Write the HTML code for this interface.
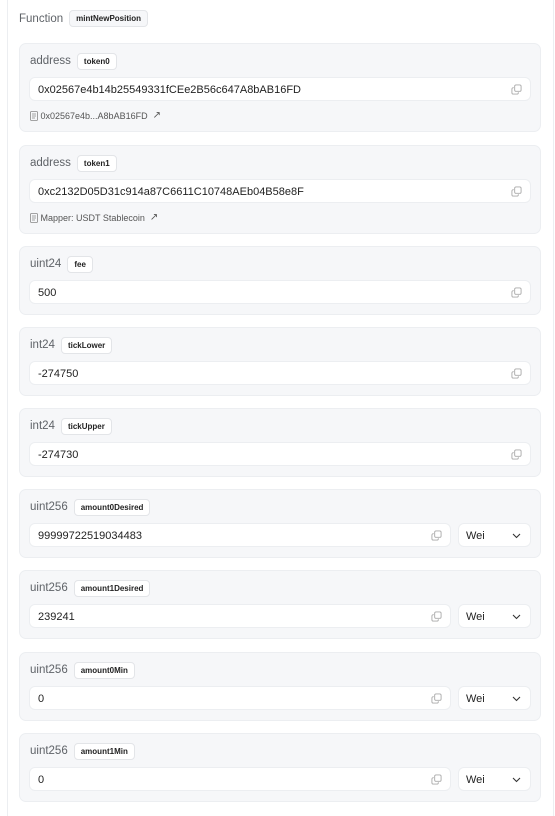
<!DOCTYPE html>
<html><head><meta charset="utf-8"><style>
body{margin:0;width:555px;height:816px;background:#fff;font-family:"Liberation Sans",Arial,sans-serif;position:relative;overflow:hidden}
.vl{position:absolute;top:0;bottom:0;width:1px;background:#eceef1}
.fn{position:absolute;left:19px;top:10px;font-size:11.5px;color:#5f6368;display:flex;align-items:center}
.pill{display:inline-block;background:#fff;border:1px solid #e3e5e8;border-radius:4px;font-size:8px;font-weight:bold;color:#222;padding:0 6px;height:15px;line-height:15px;margin-left:6px}
.fn .pill{background:#f6f7f9}
.card{position:absolute;left:19px;width:520px;background:#f6f7f9;border:1px solid #eceef1;border-radius:7px}
.lbl{position:absolute;left:10px;top:8px;font-size:11.5px;color:#5f6368;display:flex;align-items:center;height:18px}
.inp{position:absolute;left:9px;top:33px;height:24px;background:#fff;border:1px solid #eceef1;border-radius:6px;font-size:11px;color:#222;line-height:24px;padding-left:8px;box-sizing:border-box}
.cp{position:absolute;right:8px;top:6px;width:11px;height:11px}
.sel{position:absolute;left:438px;top:33px;width:73px;height:24px;background:#fff;border:1px solid #eceef1;border-radius:6px;font-size:11px;color:#222;line-height:24px;padding-left:7px;box-sizing:border-box}
.sel svg{position:absolute;right:9px;top:9px}
.lk{position:absolute;left:10px;top:66px;font-size:9px;color:#555;display:flex;align-items:center}
</style></head><body>
<div class="vl" style="left:7px"></div><div class="vl" style="left:553px"></div>
<div class="fn">Function<span class="pill">mintNewPosition</span></div>

<div class="card" style="top:43px;height:87px"><div class="lbl">address<span class="pill">token0</span></div>
<div class="inp" style="width:502px">0x02567e4b14b25549331fCEe2B56c647A8bAB16FD<svg class="cp" viewBox="0 0 12 12" fill="none" stroke="#aaa" stroke-width="1"><rect x="4" y="1" width="7" height="7" rx="1.5"/><path d="M3 4H2.5A1.5 1.5 0 0 0 1 5.5v4A1.5 1.5 0 0 0 2.5 11h4A1.5 1.5 0 0 0 8 9.5V9"/></svg></div>
<div class="lk"><svg width="8" height="10" viewBox="0 0 8 10" fill="none" stroke="#888" stroke-width=".8"><rect x=".5" y=".5" width="7" height="9" rx="1"/><path d="M2 3h4M2 5h4M2 7h3"/></svg>&nbsp;0x02567e4b...A8bAB16FD&nbsp;&nbsp;<span style="font-size:10px">↗</span></div></div>

<div class="card" style="top:145px;height:87px"><div class="lbl">address<span class="pill">token1</span></div>
<div class="inp" style="width:502px">0xc2132D05D31c914a87C6611C10748AEb04B58e8F<svg class="cp" viewBox="0 0 12 12" fill="none" stroke="#aaa" stroke-width="1"><rect x="4" y="1" width="7" height="7" rx="1.5"/><path d="M3 4H2.5A1.5 1.5 0 0 0 1 5.5v4A1.5 1.5 0 0 0 2.5 11h4A1.5 1.5 0 0 0 8 9.5V9"/></svg></div>
<div class="lk"><svg width="8" height="10" viewBox="0 0 8 10" fill="none" stroke="#888" stroke-width=".8"><rect x=".5" y=".5" width="7" height="9" rx="1"/><path d="M2 3h4M2 5h4M2 7h3"/></svg>&nbsp;Mapper: USDT Stablecoin&nbsp;&nbsp;<span style="font-size:10px">↗</span></div></div>

<div class="card" style="top:246px;height:67px"><div class="lbl">uint24<span class="pill">fee</span></div>
<div class="inp" style="width:502px">500<svg class="cp" viewBox="0 0 12 12" fill="none" stroke="#aaa" stroke-width="1"><rect x="4" y="1" width="7" height="7" rx="1.5"/><path d="M3 4H2.5A1.5 1.5 0 0 0 1 5.5v4A1.5 1.5 0 0 0 2.5 11h4A1.5 1.5 0 0 0 8 9.5V9"/></svg></div></div>

<div class="card" style="top:327px;height:67px"><div class="lbl">int24<span class="pill">tickLower</span></div>
<div class="inp" style="width:502px">-274750<svg class="cp" viewBox="0 0 12 12" fill="none" stroke="#aaa" stroke-width="1"><rect x="4" y="1" width="7" height="7" rx="1.5"/><path d="M3 4H2.5A1.5 1.5 0 0 0 1 5.5v4A1.5 1.5 0 0 0 2.5 11h4A1.5 1.5 0 0 0 8 9.5V9"/></svg></div></div>

<div class="card" style="top:408px;height:67px"><div class="lbl">int24<span class="pill">tickUpper</span></div>
<div class="inp" style="width:502px">-274730<svg class="cp" viewBox="0 0 12 12" fill="none" stroke="#aaa" stroke-width="1"><rect x="4" y="1" width="7" height="7" rx="1.5"/><path d="M3 4H2.5A1.5 1.5 0 0 0 1 5.5v4A1.5 1.5 0 0 0 2.5 11h4A1.5 1.5 0 0 0 8 9.5V9"/></svg></div></div>

<div class="card" style="top:489px;height:67px"><div class="lbl">uint256<span class="pill">amount0Desired</span></div>
<div class="inp" style="width:422px">99999722519034483<svg class="cp" viewBox="0 0 12 12" fill="none" stroke="#aaa" stroke-width="1"><rect x="4" y="1" width="7" height="7" rx="1.5"/><path d="M3 4H2.5A1.5 1.5 0 0 0 1 5.5v4A1.5 1.5 0 0 0 2.5 11h4A1.5 1.5 0 0 0 8 9.5V9"/></svg></div>
<div class="sel">Wei<svg width="9" height="6" viewBox="0 0 9 6" fill="none" stroke="#333" stroke-width="1.1"><path d="M1 1l3.5 3.5L8 1"/></svg></div></div>

<div class="card" style="top:570px;height:67px"><div class="lbl">uint256<span class="pill">amount1Desired</span></div>
<div class="inp" style="width:422px">239241<svg class="cp" viewBox="0 0 12 12" fill="none" stroke="#aaa" stroke-width="1"><rect x="4" y="1" width="7" height="7" rx="1.5"/><path d="M3 4H2.5A1.5 1.5 0 0 0 1 5.5v4A1.5 1.5 0 0 0 2.5 11h4A1.5 1.5 0 0 0 8 9.5V9"/></svg></div>
<div class="sel">Wei<svg width="9" height="6" viewBox="0 0 9 6" fill="none" stroke="#333" stroke-width="1.1"><path d="M1 1l3.5 3.5L8 1"/></svg></div></div>

<div class="card" style="top:652px;height:67px"><div class="lbl">uint256<span class="pill">amount0Min</span></div>
<div class="inp" style="width:422px">0<svg class="cp" viewBox="0 0 12 12" fill="none" stroke="#aaa" stroke-width="1"><rect x="4" y="1" width="7" height="7" rx="1.5"/><path d="M3 4H2.5A1.5 1.5 0 0 0 1 5.5v4A1.5 1.5 0 0 0 2.5 11h4A1.5 1.5 0 0 0 8 9.5V9"/></svg></div>
<div class="sel">Wei<svg width="9" height="6" viewBox="0 0 9 6" fill="none" stroke="#333" stroke-width="1.1"><path d="M1 1l3.5 3.5L8 1"/></svg></div></div>

<div class="card" style="top:733px;height:67px"><div class="lbl">uint256<span class="pill">amount1Min</span></div>
<div class="inp" style="width:422px">0<svg class="cp" viewBox="0 0 12 12" fill="none" stroke="#aaa" stroke-width="1"><rect x="4" y="1" width="7" height="7" rx="1.5"/><path d="M3 4H2.5A1.5 1.5 0 0 0 1 5.5v4A1.5 1.5 0 0 0 2.5 11h4A1.5 1.5 0 0 0 8 9.5V9"/></svg></div>
<div class="sel">Wei<svg width="9" height="6" viewBox="0 0 9 6" fill="none" stroke="#333" stroke-width="1.1"><path d="M1 1l3.5 3.5L8 1"/></svg></div></div>
</body></html>
